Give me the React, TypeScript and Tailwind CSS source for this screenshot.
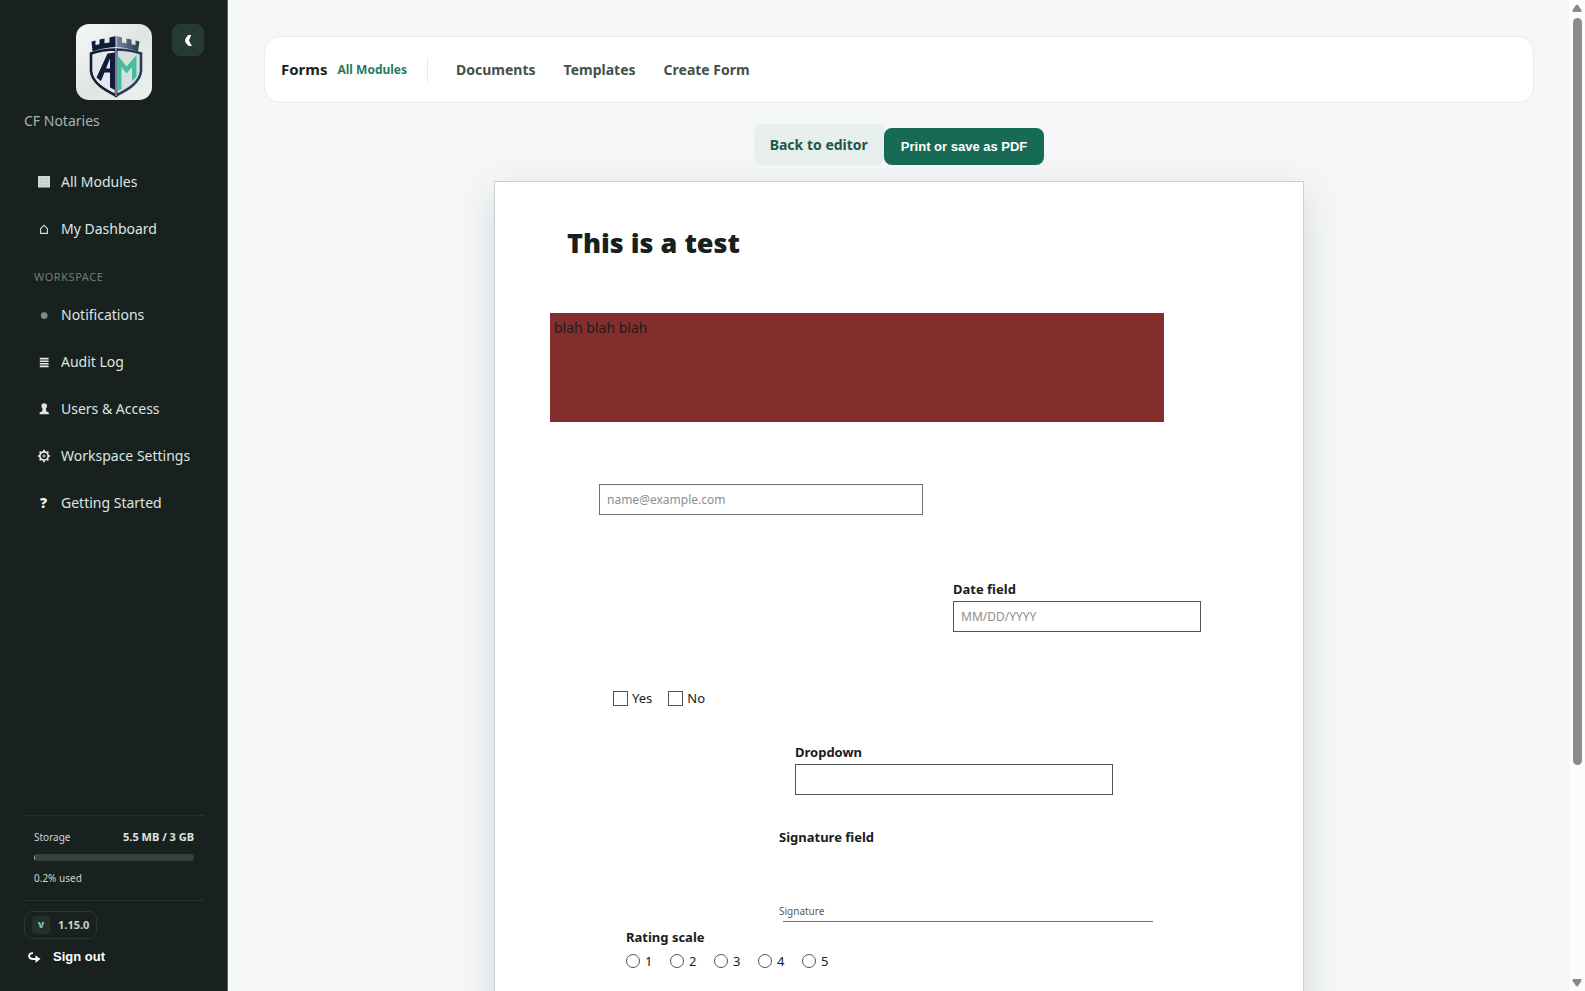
import { ReactNode, useState } from "react";

interface NavItem {
  label: string;
  icon: ReactNode;
}

const mainNav: NavItem[] = [
  {
    label: "All Modules",
    icon: (
      <svg viewBox="0 0 14 14" className="w-3.5 h-3.5">
        <rect x="1" y="1" width="12" height="11.5" fill="#d3dcd8" />
        <path d="M4 1v11.5M7 1v11.5M10 1v11.5M1 4h12M1 7h12M1 10h12" stroke="#b4bfba" strokeWidth=".5" />
      </svg>
    ),
  },
  {
    label: "My Dashboard",
    icon: (
      <svg viewBox="0 0 14 14" className="w-3.5 h-3.5" fill="none" stroke="#d3dcd8" strokeWidth="1.1">
        <path d="M3.6 11.4V6.8L7 3.2l3.4 3.6v4.6z" />
      </svg>
    ),
  },
];

const workspaceNav: NavItem[] = [
  {
    label: "Notifications",
    icon: (
      <svg viewBox="0 0 14 14" className="w-3.5 h-3.5">
        <circle cx="7.2" cy="7.6" r="3.4" fill="#7f8986" />
      </svg>
    ),
  },
  {
    label: "Audit Log",
    icon: (
      <svg viewBox="0 0 14 14" className="w-3.5 h-3.5" stroke="#e6ecea" strokeWidth="1.6">
        <path d="M2.8 3.6h8.8M2.8 6.2h8.8M2.8 8.8h8.8M2.8 11.4h8.8" />
      </svg>
    ),
  },
  {
    label: "Users & Access",
    icon: (
      <svg viewBox="0 0 14 14" className="w-3.5 h-3.5" fill="#dfe6e3">
        <circle cx="7.2" cy="4" r="2.8" />
        <path d="M5.6 6h3.2l.5 3.2 2.5 1.2v1.9H2.6v-1.9l2.5-1.2z" />
      </svg>
    ),
  },
  {
    label: "Workspace Settings",
    icon: (
      <svg viewBox="0 0 14 14" className="w-3.5 h-3.5" fill="none" stroke="#e6ecea">
        <circle cx="7" cy="7" r="4.2" strokeWidth="1.7" />
        <circle cx="7" cy="7" r="1.1" strokeWidth=".9" />
        <path
          d="M7 .8v1.6M7 11.600v1.6M.8 7h1.6M11.600 7h1.6M2.600 2.600l1.100 1.100M10.300 10.300l1.100 1.100M2.600 11.400l1.100-1.100M10.300 3.700l1.100-1.100"
          strokeWidth="1.7"
        />
      </svg>
    ),
  },
  { label: "Getting Started", icon: <span className="text-sm font-black text-[#f0f4f2]">?</span> },
];

const moduleLinks = ["Documents", "Templates", "Create Form"];

function Logo() {
  return (
    <svg viewBox="0 0 76 76" className="w-[76px] h-[76px]" role="img" aria-label="AM">
      <defs>
        <linearGradient id="tile" x1="0" y1="0" x2="1" y2="1">
          <stop offset="0" stopColor="#f7f9f8" />
          <stop offset=".5" stopColor="#e0e5e4" />
          <stop offset="1" stopColor="#edf3f0" />
        </linearGradient>
        <linearGradient id="tower" x1="0" y1="0" x2="1" y2="0">
          <stop offset="0" stopColor="#7d899c" />
          <stop offset="1" stopColor="#2a3b55" />
        </linearGradient>
      </defs>
      <rect width="76" height="76" rx="13" fill="url(#tile)" />
      <path d="M15.5 17.5l4-1V21l4-.8v-4.700l5-1v4.700l5-.8V13.500l6.500-1.500v11Q27 23.500 16.500 27.500z" fill="#101d3a" />
      <path d="M40 12l6 1.500v4.900l4.500.8v-4.700l5 1v4.700l4 .8v-4.500l4 1-1.500 10Q52 23.500 40 23z" fill="url(#tower)" />
      <path d="M40 25.500q14 0 25 4V47C64 59 51 66 40 71.500z" fill="#d9dedf" stroke="#2a3a55" strokeWidth="2.6" />
      <path d="M40 25.500q-14 0-25 4V47C16 59 29 66 40 71.500z" fill="#e4e8ea" stroke="#101d3a" strokeWidth="2.6" />
      <path d="M20.500 53.500L31.500 29.500l7.500-1V66l-5-2.500V48.500h-5.500L25 57z" fill="#101d3a" />
      <path d="M30 44.500h4V34.500z" fill="#e4e8ea" />
      <path d="M41 30.500l9.500 12 10-11.500v22l-4.500 4V43l-5.500 6.500L45.500 43v22L41 67.500z" fill="#45bd9b" />
      <path d="M40 12v60" stroke="#eef1f2" strokeWidth=".9" />
    </svg>
  );
}

function NavLink({ item }: { item: NavItem }) {
  return (
    <a href="#" className="flex items-center gap-2.5 h-[47px] pl-3 text-sm text-[#dde5e2]">
      <span className="flex items-center justify-center w-[15px]">{item.icon}</span>
      {item.label}
    </a>
  );
}

function Sidebar() {
  return (
    <aside className="flex flex-col shrink-0 w-[228px] h-full pl-6 pr-[23px] pt-6 pb-[22px] bg-[#18211e] border-r border-[#59625f]">
      <div className="grid grid-cols-[32px_1fr_32px] items-start">
        <span />
        <div className="flex justify-center">
          <Logo />
        </div>
        <button
          className="flex items-center justify-center w-8 h-8 rounded-lg bg-[#243a33] text-white"
          aria-label="Collapse sidebar"
        >
          <svg viewBox="0 0 10 14" className="w-2.5 h-3.5" fill="#fff">
            <path d="M5.200 2h3L6 7.500 8.800 13H5.600Q2 9.500 2 7.500T5.200 2z" />
          </svg>
        </button>
      </div>
      <p className="mt-[9px] text-sm leading-6 text-[#a9b3af]">CF Notaries</p>

      <nav className="mt-[25px]">
        {mainNav.map((item) => (
          <NavLink key={item.label} item={item} />
        ))}
        <p className="mt-[15px] mb-1 pl-2.5 text-[11px] leading-5 tracking-wider uppercase text-[#6a7f77]">
          Workspace
        </p>
        {workspaceNav.map((item) => (
          <NavLink key={item.label} item={item} />
        ))}
      </nav>

      <div className="mt-auto pt-[11px] pb-3 px-2.5 border-y border-[#27322e] text-[10px] leading-5 text-[#ccd5d1]">
        <div className="flex justify-between">
          <span>Storage</span>
          <strong className="text-[11px] text-[#dde5e2]">5.5 MB / 3 GB</strong>
        </div>
        <div className="h-[7px] mt-[7px] mb-[7px] rounded-full bg-[#36423e] overflow-hidden">
          <div className="w-px h-full bg-[#9fb5ac]" />
        </div>
        <p className="leading-5">0.2% used</p>
      </div>
      <div className="flex items-center gap-2 self-start h-7 mt-2.5 px-[7px] rounded-lg border border-[#2a3632] text-[11px] font-bold text-[#ccd5d1]">
        <span className="flex items-center justify-center w-[18px] h-[18px] rounded bg-[#25302d] text-[9px] font-black text-[#71c4a6]">
          V
        </span>
        1.15.0
      </div>
      <button className="flex items-center gap-3 self-start h-6 mt-1.5 pl-1 font-[Liberation_Sans,Arial,sans-serif] text-[13px] font-bold text-white">
        <svg viewBox="0 0 13 11" className="w-[13px] h-[11px]" fill="none" stroke="#fff" strokeWidth="1.8">
          <path d="M5 1.200C2 1 .8 2.800 1.200 4.500S3.500 7 5 7h3" />
          <path d="M7.500 3.200L12.500 7l-5 3.800z" fill="#fff" stroke="none" />
        </svg>
        Sign out
      </button>
    </aside>
  );
}

function ModuleBar() {
  return (
    <header className="flex items-center shrink-0 w-full h-[67px] px-4 bg-white rounded-2xl border border-[#e9ecef]">
      <span className="text-[15px] font-bold text-[#1c2320]">Forms</span>
      <a href="#" className="ml-2.5 text-xs font-bold text-[#1f7d5f]">
        All Modules
      </a>
      <div className="w-px h-6 ml-5 mr-7 bg-[#e6eaec]" />
      <nav className="flex gap-7 text-sm font-bold text-[#43504b]">
        {moduleLinks.map((link) => (
          <a key={link} href="#">
            {link}
          </a>
        ))}
      </nav>
    </header>
  );
}

function FormPage() {
  const [answer, setAnswer] = useState("");
  const [rating, setRating] = useState(0);

  return (
    <section className="w-[810px] shrink-0 h-[1050px] mt-4 px-[55px] bg-white border border-[#cdd0d2] shadow-[0_12px_36px_rgba(20,30,28,0.12)] text-[#17201d]">
      <h1 className="mt-[41px] ml-[17px] text-[27px] leading-10 font-black">This is a test</h1>

      <div className="w-[614px] h-[109px] mt-[50px] px-1 py-[3px] bg-[#842d2d] text-sm leading-6">blah blah blah</div>

      <input
        type="email"
        aria-label="Email"
        placeholder="name@example.com"
        className="block w-[324px] h-[31px] mt-[62px] ml-[49px] px-[7px] border border-[#6c7270] text-xs placeholder:text-[#8b8f8d]"
      />

      <div className="flex flex-col w-[248px] mt-16 ml-[403px]">
        <label htmlFor="date" className="text-[13px] leading-5 font-bold">
          Date field
        </label>
        <input
          id="date"
          type="text"
          placeholder="MM/DD/YYYY"
          className="h-[31px] mt-0.5 px-[7px] border border-[#4f5654] text-xs placeholder:text-[#8b8f8d]"
        />
      </div>

      <div className="flex gap-4 mt-14 ml-[63px] text-[13px] leading-5">
        {["Yes", "No"].map((option) => (
          <label key={option} className="flex items-center gap-1">
            <input
              type="checkbox"
              checked={answer === option}
              onChange={() => setAnswer(answer === option ? "" : option)}
              className="appearance-none w-[15px] h-[15px] border border-[#4f5654] checked:bg-[#17201d]"
            />
            {option}
          </label>
        ))}
      </div>

      <div className="flex flex-col w-[318px] mt-[34px] ml-[245px]">
        <label htmlFor="dropdown" className="text-[13px] leading-5 font-bold">
          Dropdown
        </label>
        <select id="dropdown" className="appearance-none h-[31px] mt-0.5 border border-[#4f5654]">
          <option></option>
        </select>
      </div>

      <div className="mt-8 ml-[229px] w-[374px]">
        <p className="text-[13px] leading-5 font-bold">Signature field</p>
        <p className="mt-14 text-[10px] leading-4 text-[#545b58]">Signature</p>
        <hr className="ml-1 mt-0.5 border-[#6c7270]" />
      </div>

      <fieldset className="mt-[5px] ml-[76px]">
        <legend className="text-[13px] leading-5 font-bold">Rating scale</legend>
        <div className="flex mt-1 text-[13px] leading-5">
          {[1, 2, 3, 4, 5].map((n) => (
            <label key={n} className="flex items-center gap-[5px] w-11">
              <input
                type="radio"
                name="rating"
                checked={rating === n}
                onChange={() => setRating(n)}
                className="appearance-none w-3.5 h-3.5 rounded-full border border-[#4f5654] checked:bg-[#17201d]"
              />
              {n}
            </label>
          ))}
        </div>
      </fieldset>
    </section>
  );
}

function ScrollTrack() {
  return (
    <div className="flex flex-col items-center justify-between shrink-0 w-4 h-full py-1 bg-[#fcfcfc]" aria-hidden="true">
      <svg viewBox="0 0 10 8" className="w-2.5 h-2" fill="#8b8b8b">
        <path d="M4 1q1-1 2 0l3.500 5q.5 2-1 2h-7q-1.500 0-1-2z" />
      </svg>
      <div className="w-[9px] h-[76%] mt-1.5 mb-auto rounded-full bg-[#8b8b8b]" />
      <svg viewBox="0 0 10 8" className="w-2.5 h-2" fill="#8b8b8b">
        <path d="M4 7q1 1 2 0l3.500-5q.5-2-1-2h-7Q0 0 .5 2z" />
      </svg>
    </div>
  );
}

export default function App() {
  return (
    <div className="flex h-screen overflow-hidden bg-[#f4f6f8] font-[Noto_Sans,sans-serif]">
      <Sidebar />
      <main className="flex flex-col flex-1 items-center min-w-0 pl-9 pr-[35px] pt-9 overflow-hidden">
        <ModuleBar />

        {/* Page actions */}
        <div className="flex items-end mt-[21px]">
          <a href="#" className="px-4 py-2 rounded-lg bg-[#e7efec] text-sm leading-[25px] font-bold text-[#1e5746]">
            Back to editor
          </a>
          <button className="h-[37px] px-[17px] rounded-lg bg-[#176b54] font-[Liberation_Sans,Arial,sans-serif] text-[13px] font-bold text-white">
            Print or save as PDF
          </button>
        </div>

        <FormPage />
      </main>
      <ScrollTrack />
    </div>
  );
}
